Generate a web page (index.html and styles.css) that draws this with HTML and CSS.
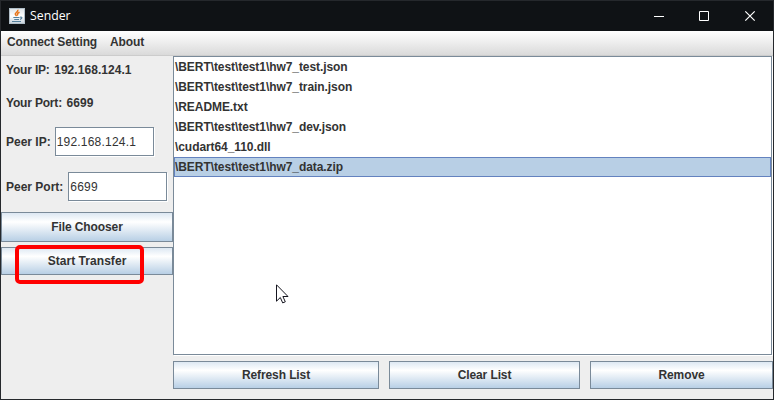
FILE: index.html
```
<!DOCTYPE html>
<html lang="en">
<head>
<meta charset="utf-8">
<title>Sender</title>
<link rel="stylesheet" href="styles.css">
</head>
<body>
<div class="window">
  <header class="titlebar">
    <svg class="app-icon" width="16" height="16" viewBox="0 0 16 16">
      <defs><linearGradient id="tile" x1="0" y1="0" x2="0" y2="1"><stop offset="0" stop-color="#dde3e7"/><stop offset=".5" stop-color="#fff"/><stop offset="1" stop-color="#c5d1db"/></linearGradient></defs>
      <rect x=".5" y=".5" width="15" height="15" fill="url(#tile)" stroke="#b0bec8"/>
      <path d="M8.800 1.800C9.800 4 5.200 4.600 6.400 6.600L7.600 8M10.600 4.300C8.400 5.200 8 6 8.900 7.500" fill="none" stroke="#e8761c" stroke-width="1.500"/>
      <path d="M4.300 9.500H10.500M5.200 11.500H10M3 13.500H12M11 9.300C13.700 8.500 13.500 10.700 11 11.400" fill="none" stroke="#55809c" stroke-width="1.100"/>
    </svg>
    <span class="title">Sender</span>
    <svg class="controls" width="104" height="12" viewBox="0 0 104 12" fill="none" stroke="#fff">
      <path d="M0 6.500H10M45.500 1.500H54.500V10.500H45.500Z"/>
      <path d="M91.300 1.300L100.700 10.700M100.700 1.300L91.300 10.700" stroke-width="1.200"/>
    </svg>
  </header>
  <nav class="menubar"><span class="menu-connect">Connect Setting</span><span class="menu-about">About</span></nav>
  <main class="content">
    <aside class="side">
      <div class="row info"><span class="caption">Your IP:</span><span class="value">192.168.124.1</span></div>
      <div class="row info second"><span class="caption">Your Port:</span><span class="value">6699</span></div>
      <label class="row field-row ip"><span>Peer IP:</span><input class="field" value="192.168.124.1"></label>
      <label class="row field-row port"><span>Peer Port:</span><input class="field" value="6699"></label>
      <button class="button chooser">File Chooser</button>
      <button class="button transfer">Start Transfer<span class="marker"></span></button>
    </aside>
    <section class="files">
      <ul class="list">
        <li>\BERT\test\test1\hw7_test.json</li>
        <li>\BERT\test\test1\hw7_train.json</li>
        <li>\README.txt</li>
        <li>\BERT\test\test1\hw7_dev.json</li>
        <li>\cudart64_110.dll</li>
        <li class="selected">\BERT\test\test1\hw7_data.zip</li>
      </ul>
      <div class="actions">
        <button class="button">Refresh List</button>
        <button class="button">Clear List</button>
        <button class="button">Remove</button>
      </div>
    </section>
  </main>
  <svg class="cursor" width="14" height="21" viewBox="0 0 14 21">
    <path d="M.5 .8V17.200L4.300 13.500L6.700 18.900L9.300 17.800L6.900 12.500H12Z" fill="#fff" stroke="#15151f"/>
  </svg>
</div>
</body>
</html>
```
FILE: styles.css
```
* { box-sizing: border-box; }
body { margin: 0; font: bold 12px/16px "Liberation Sans", Arial, sans-serif; color: #333; }
.window { position: relative; width: 774px; height: 400px; border: 1px solid #25282c; background: #eee; display: flex; flex-direction: column; }
.titlebar { height: 30px; background: #0f1215; display: flex; align-items: center; padding: 0 16px 0 8px; color: #fff; }
.title { margin-left: 5px; font: 12.3px/16px "Open Sans", sans-serif; }
.controls { margin-left: auto; margin-right: -1px; }
.menubar { height: 25px; padding: 3px 6px; background: linear-gradient(#fff, #dadada); border-bottom: 1px solid #ccc; display: flex; gap: 13px; letter-spacing: -.13px; }
.content { flex: 1; display: flex; }
.side { width: 172px; display: flex; flex-direction: column; }
.row { display: flex; align-items: center; gap: 5px; padding-left: 5px; white-space: nowrap; }
.caption { letter-spacing: -.18px; }
.value { letter-spacing: .05px; margin-left: -.5px; }
.info { height: 28px; }
.second { margin-top: 5px; }
.field-row { height: 30px; margin-top: 10px; }
.ip { gap: 4px; }
.port { margin-top: 15px; }
.field { width: 99px; height: 29px; margin-bottom: 1px; padding: 0 1px; border: 1px solid #7a8a99; border-radius: 0; outline: 0; background: #fff; box-shadow: 1px 1px #fff; font: 12px "Liberation Sans", Arial, sans-serif; letter-spacing: .2px; color: #333; }
.button { height: 28px; padding: 0; border: 1px solid #7a8a99; border-radius: 0; background: linear-gradient(#dde8f3, #fff 32%, #b8cfe5); font: inherit; letter-spacing: -.1px; color: #333; }
.chooser { height: 30px; margin-top: 10px; }
.transfer { position: relative; margin-top: 5px; letter-spacing: .05px; }
.marker { position: absolute; left: 13px; top: -3px; width: 129px; height: 39px; border: 4px solid #f00; border-radius: 5px; }
.files { flex: 1; display: flex; flex-direction: column; }
.list { width: 599px; height: 299px; margin: 0; padding: 0; border: 1px solid #7a8a99; background: #fff; box-shadow: 1px 1px #fff; list-style: none; letter-spacing: -.07px; }
.list li { height: 20px; padding: 1px 1px; line-height: 18px; }
.list .selected { padding: 0; border: 1px solid #6382bf; background: #b8cfe5; }
.actions { margin-top: 6px; display: grid; grid-template-columns: 206px 191px 183px; gap: 10px; }
.cursor { position: absolute; left: 275px; top: 283px; }
```
